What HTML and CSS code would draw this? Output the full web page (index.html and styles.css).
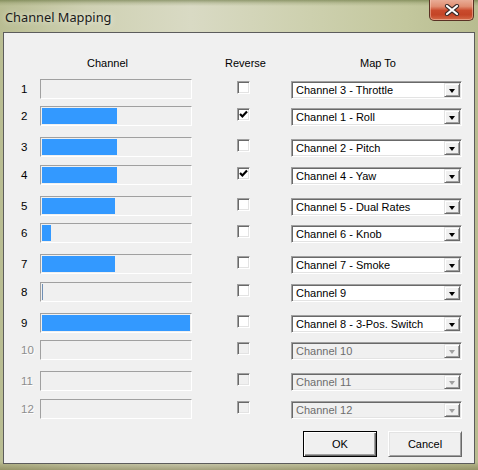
FILE: index.html
```html
<!DOCTYPE html>
<html>
<head>
<meta charset="utf-8">
<link rel="stylesheet" href="styles.css">
</head>
<body>
<div class="window">
  <div class="titlebar">
    <span class="title">Channel Mapping</span>
    <div class="close">
      <svg width="16" height="12" viewBox="0 0 16 12"><path d="M3 2 L13 10 M13 2 L3 10" stroke="#3a2a28" stroke-width="4.2" stroke-linecap="round" fill="none"/><path d="M3 2 L13 10 M13 2 L3 10" stroke="#ffffff" stroke-width="2.2" stroke-linecap="round" fill="none"/></svg>
    </div>
  </div>
  <div class="client">
    <div class="grid">
      <div class="hdr hdr-channel">Channel</div>
      <div class="hdr hdr-reverse">Reverse</div>
      <div class="hdr hdr-map">Map To</div>

      <div class="num">1</div>
      <div class="bar"><div class="fill" style="width:0%"></div></div>
      <div class="chkcell"><span class="chk"></span></div>
      <div class="combo"><span class="val">Channel 3 - Throttle</span><span class="btn"><i class="arrow"></i></span></div>

      <div class="num">2</div>
      <div class="bar"><div class="fill" style="width:50.7%"></div></div>
      <div class="chkcell"><span class="chk on"><svg width="9" height="9" viewBox="0 0 9 9"><path d="M1 4 L3.4 6.5 L8 1.6" stroke="#000" stroke-width="2.2" fill="none"/></svg></span></div>
      <div class="combo"><span class="val">Channel 1 - Roll</span><span class="btn"><i class="arrow"></i></span></div>

      <div class="num">3</div>
      <div class="bar"><div class="fill" style="width:50.7%"></div></div>
      <div class="chkcell"><span class="chk"></span></div>
      <div class="combo"><span class="val">Channel 2 - Pitch</span><span class="btn"><i class="arrow"></i></span></div>

      <div class="num">4</div>
      <div class="bar"><div class="fill" style="width:50.7%"></div></div>
      <div class="chkcell"><span class="chk on"><svg width="9" height="9" viewBox="0 0 9 9"><path d="M1 4 L3.4 6.5 L8 1.6" stroke="#000" stroke-width="2.2" fill="none"/></svg></span></div>
      <div class="combo"><span class="val">Channel 4 - Yaw</span><span class="btn"><i class="arrow"></i></span></div>

      <div class="num">5</div>
      <div class="bar"><div class="fill" style="width:49.3%"></div></div>
      <div class="chkcell"><span class="chk"></span></div>
      <div class="combo"><span class="val">Channel 5 - Dual Rates</span><span class="btn"><i class="arrow"></i></span></div>

      <div class="num">6</div>
      <div class="bar"><div class="fill" style="width:6%"></div></div>
      <div class="chkcell"><span class="chk"></span></div>
      <div class="combo"><span class="val">Channel 6 - Knob</span><span class="btn"><i class="arrow"></i></span></div>

      <div class="num">7</div>
      <div class="bar"><div class="fill" style="width:49.3%"></div></div>
      <div class="chkcell"><span class="chk"></span></div>
      <div class="combo"><span class="val">Channel 7 - Smoke</span><span class="btn"><i class="arrow"></i></span></div>

      <div class="num">8</div>
      <div class="bar"><div class="fill thin" style="width:1px"></div></div>
      <div class="chkcell"><span class="chk"></span></div>
      <div class="combo"><span class="val">Channel 9</span><span class="btn"><i class="arrow"></i></span></div>

      <div class="num">9</div>
      <div class="bar"><div class="fill" style="width:100%"></div></div>
      <div class="chkcell"><span class="chk"></span></div>
      <div class="combo"><span class="val">Channel 8 - 3-Pos. Switch</span><span class="btn"><i class="arrow"></i></span></div>

      <div class="num off">10</div>
      <div class="bar"><div class="fill" style="width:0%"></div></div>
      <div class="chkcell"><span class="chk off"></span></div>
      <div class="combo off"><span class="val">Channel 10</span><span class="btn"><i class="arrow"></i></span></div>

      <div class="num off">11</div>
      <div class="bar"><div class="fill" style="width:0%"></div></div>
      <div class="chkcell"><span class="chk off"></span></div>
      <div class="combo off"><span class="val">Channel 11</span><span class="btn"><i class="arrow"></i></span></div>

      <div class="num off">12</div>
      <div class="bar"><div class="fill" style="width:0%"></div></div>
      <div class="chkcell"><span class="chk off"></span></div>
      <div class="combo off"><span class="val">Channel 12</span><span class="btn"><i class="arrow"></i></span></div>
    </div>
    <div class="buttons">
      <div class="pbtn default"><span>OK</span></div>
      <div class="pbtn"><span>Cancel</span></div>
    </div>
  </div>
</div>
</body>
</html>
```
FILE: styles.css
```css
* { box-sizing: border-box; }
html, body { margin: 0; padding: 0; }
body {
  width: 478px;
  height: 470px;
  overflow: hidden;
  font-family: "Liberation Sans", Arial, sans-serif;
  font-size: 11px;
  color: #000;
}
.window {
  width: 478px;
  height: 470px;
  padding: 0 3px 6px 3px;
  display: flex;
  flex-direction: column;
  background:
    linear-gradient(180deg, rgba(90,105,50,0.55) 0px, rgba(120,130,80,0.25) 3px, rgba(255,255,255,0) 6px),
    linear-gradient(0deg, rgba(120,115,70,0.55) 0px, rgba(150,145,100,0.3) 6px, rgba(255,255,255,0) 8px),
    linear-gradient(90deg, #b9bd92 0%, #cfd1b3 18%, #d9dac4 40%, #cdd0ae 65%, #c3c79d 85%, #b8bc90 100%);
}
.titlebar {
  height: 32px;
  flex: none;
  display: flex;
  justify-content: space-between;
  align-items: flex-start;
}
.title {
  margin: 9px 0 0 2px;
  font-family: "Noto Sans", "Open Sans", sans-serif;
  font-size: 12.8px;
  line-height: 17px;
  color: #1a1a1a;
  text-shadow: 0 0 6px rgba(255,255,255,0.8);
}
.close {
  width: 45px;
  height: 22px;
  margin-top: -1px;
  margin-right: 1px;
  border: 1px solid #5a3124;
  border-top: none;
  border-radius: 0 0 5px 5px;
  background: linear-gradient(180deg, #eab19c 0%, #e08e72 35%, #c94a2c 55%, #c44426 75%, #d46a48 100%);
  box-shadow: inset 0 0 0 1px rgba(255,220,200,0.45);
  display: flex;
  align-items: center;
  justify-content: center;
}
.client {
  flex: 1;
  border: 1px solid #5c5c5c;
  background: #f0f0f0;
}
.grid {
  display: grid;
  grid-template-columns: 19px 152px 99px 171px;
  grid-template-rows: 25px 27px 31px 28px 31px 27px 31px 28px 31px 27px 31px 28px 20px;
  padding: 21px 0 0 17px;
}
.hdr {
  align-self: start;
  margin-top: 2px;
  line-height: 14px;
  text-align: center;
}
.hdr-channel { grid-column: 1 / 3; padding-left: 2px; }
.hdr-reverse { grid-column: 3; padding-left: 8px; }
.hdr-map { grid-column: 4; padding-left: 3px; }
.num {
  align-self: start;
  line-height: 20px;
  height: 20px;
  font-size: 11.5px;
}
.num.off { color: #8d8d8d; text-shadow: 1px 1px 0 #fff; }
.bar {
  align-self: start;
  width: 152px;
  height: 20px;
  padding: 1px;
  border-style: solid;
  border-width: 1px;
  border-color: #a0a0a0 #ffffff #ffffff #a0a0a0;
  background: #f0f0f0;
}
.fill {
  height: 16px;
  background: #3399ff;
}
.fill.thin { background: #6f8fb5; }
.chkcell {
  align-self: start;
  padding: 2px 0 0 45px;
}
.chk {
  display: flex;
  align-items: center;
  justify-content: center;
  width: 13px;
  height: 13px;
  border-style: solid;
  border-width: 1px;
  border-color: #a0a0a0 #ffffff #ffffff #a0a0a0;
  box-shadow: inset 1px 1px 0 #696969, inset -1px -1px 0 #e3e3e3;
  background: #fff;
}
.chk.off { background: #f0f0f0; }
.combo {
  align-self: start;
  margin-top: 2px;
  width: 171px;
  height: 18px;
  display: flex;
  align-items: stretch;
  border-style: solid;
  border-width: 1px;
  border-color: #a0a0a0 #ffffff #ffffff #a0a0a0;
  box-shadow: inset 1px 1px 0 #696969, inset -1px -1px 0 #e3e3e3;
  background: #fff;
  padding: 1px;
}
.combo .val {
  flex: 1;
  padding-left: 3px;
  line-height: 14px;
  white-space: nowrap;
  overflow: hidden;
}
.combo .btn {
  width: 16px;
  flex: none;
  display: flex;
  align-items: center;
  justify-content: center;
  background: #f0f0f0;
  border-style: solid;
  border-width: 1px;
  border-color: #e3e3e3 #696969 #696969 #e3e3e3;
  box-shadow: inset 1px 1px 0 #fff, inset -1px -1px 0 #a0a0a0;
}
.arrow {
  display: block;
  width: 0;
  height: 0;
  border-left: 3.5px solid transparent;
  border-right: 3.5px solid transparent;
  border-top: 4px solid #000;
  margin-top: 1px;
}
.combo.off { background: #f0f0f0; }
.combo.off .val { color: #6d6d6d; }
.combo.off .arrow { border-top-color: #a0a0a0; }
.buttons {
  display: flex;
  justify-content: flex-end;
  gap: 11px;
  padding-right: 12px;
  margin-top: 12px;
}
.pbtn {
  width: 74px;
  height: 26px;
  display: flex;
  align-items: center;
  justify-content: center;
  background: #f0f0f0;
  border-style: solid;
  border-width: 1px;
  border-color: #ffffff #696969 #696969 #ffffff;
  box-shadow: inset 1px 1px 0 #e3e3e3, inset -1px -1px 0 #a0a0a0;
}
.pbtn.default {
  border: 1px solid #000;
  box-shadow: inset 1px 1px 0 #fff, inset -1px -1px 0 #696969, inset -2px -2px 0 #a0a0a0;
}
```
